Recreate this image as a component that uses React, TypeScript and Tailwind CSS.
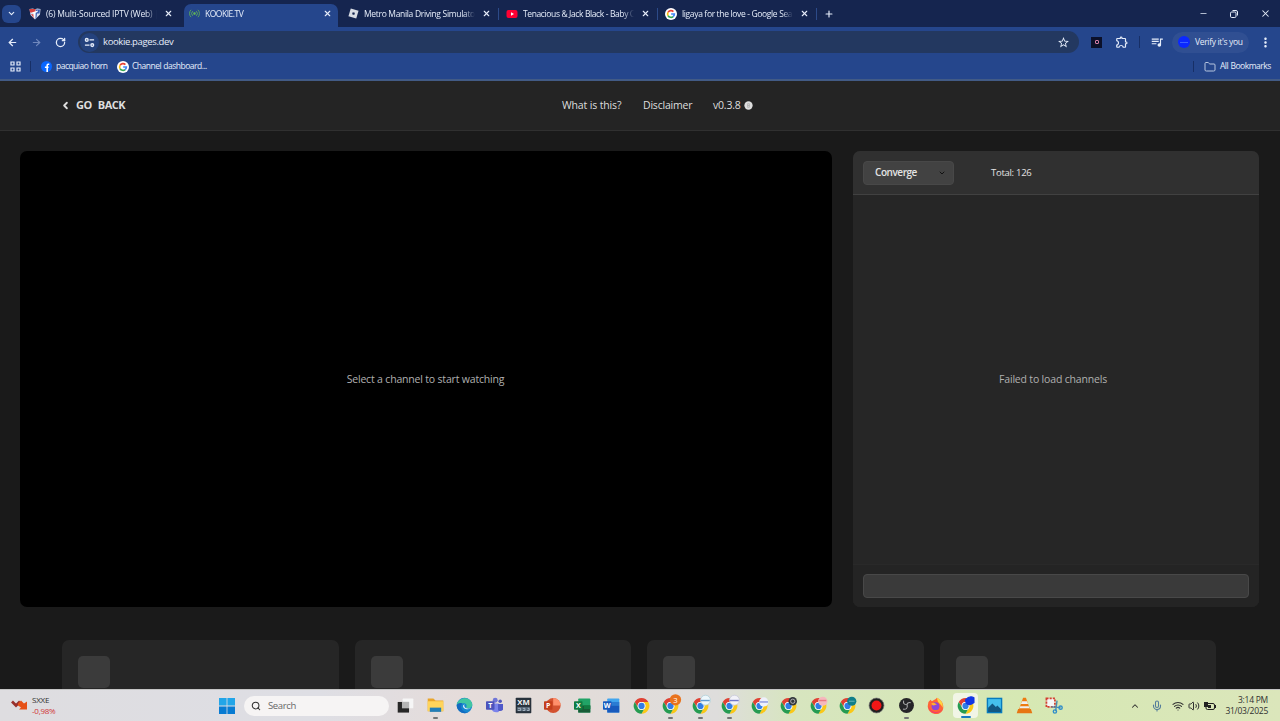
import React from 'react';
import {
  ArrowLeft,
  ArrowRight,
  ChevronDown,
  ChevronLeft,
  ChevronUp,
  Folder,
  Mic,
  Minus,
  Plus,
  RotateCw,
  Search,
  Volume2,
  Wifi,
  X
} from 'lucide-react';
import { MdMoreVert, MdOutlineExtension, MdQueueMusic, MdStarBorder } from 'react-icons/md';

const GoogleIcon = () => (
  <svg viewBox="0 0 24 24" className="size-[12px] shrink-0">
    <circle cx="12" cy="12" r="12" fill="#fff" />
    <g fill="none" strokeWidth="3.3">
      <path d="M16.8 7.2A6.8 6.8 0 0 0 6 8.800" stroke="#ea4335" />
      <path d="M6 8.800a6.800 6.800 0 0 0 0 6.400" stroke="#fbbc05" />
      <path d="M6 15.200a6.800 6.800 0 0 0 10.300 2" stroke="#34a853" />
      <path d="M16.300 17.200a6.800 6.800 0 0 0 2.500-5.200H12.300" stroke="#4285f4" />
    </g>
  </svg>
);

const FacebookIcon = () => (
  <svg viewBox="0 0 24 24" className="ml-[10px] size-[11px] shrink-0">
    <circle cx="12" cy="12" r="12" fill="#0866ff" />
    <path d="M18 7h-2.500q-2 0-2 2v15M8.500 13.500h8" fill="none" stroke="#fff" strokeWidth="3.400" />
  </svg>
);

const ShieldIcon = () => (
  <svg viewBox="0 0 24 24" className="size-[12px] shrink-0">
    <path d="M1 2 8 1l4 2 4-2 7 1-1 11-10 10L3 14Z" fill="#d9dfee" />
    <path d="M1 2h12v7H2ZM4 12l6 9v-8Z" fill="#d8413e" />
    <path d="M14 3h8l-1 8h-5l-1 8-2 3Z" fill="#3b62b5" />
    <path d="m5 9 13-4-1 3-5 2v9H9v-9Z" fill="#fff" />
  </svg>
);

const SignalIcon = () => (
  <svg viewBox="0 0 24 24" fill="none" stroke="#5dad5a" strokeWidth="2" className="size-[11px] shrink-0">
    <circle cx="12" cy="12" r="2.2" fill="#5dad5a" />
    <path d="M8 7a7 7 0 0 0 0 10M16 7a7 7 0 0 1 0 10M4.5 4a11.500 11.500 0 0 0 0 16M19.500 4a11.500 11.500 0 0 1 0 16" />
  </svg>
);

const RobloxIcon = () => (
  <svg viewBox="0 0 24 24" className="size-[11px] shrink-0">
    <path d="M6 1 23 6l-5 17L1 18Z" fill="#d9dde5" />
    <path d="m10.200 9 4.800 1.300-1.300 4.800L9 13.800Z" fill="#15254f" />
  </svg>
);

const YoutubeIcon = () => (
  <svg viewBox="0 0 24 24" className="size-[12px] shrink-0">
    <rect x="1" y="4" width="22" height="16" rx="4" fill="#ff0033" />
    <path d="m10 8.500 6 3.500-6 3.500Z" fill="#fff" />
  </svg>
);

const tabs = [
  { title: '(6) Multi-Sourced IPTV (Web) | I', icon: <ShieldIcon />, text: 'tracking-[-0.2px]' },
  { title: 'KOOKIE.TV', icon: <SignalIcon />, active: true, text: 'tracking-[-0.48px]' },
  { title: 'Metro Manila Driving Simulator', icon: <RobloxIcon />, text: 'tracking-[-0.32px]' },
  { title: 'Tenacious & Jack Black - Baby O', icon: <YoutubeIcon />, text: 'tracking-[-0.38px]' },
  { title: 'ligaya for the love - Google Sea', icon: <GoogleIcon />, text: 'tracking-[-0.35px]' }
];

const TabStrip = () => (
  <div className="flex h-[27px] items-center bg-[#15254f]">
    <div className="w-[25px] pl-[2px]">
      <div className="flex h-[18px] w-[19px] items-center justify-center rounded-[6px] bg-[#25468c]">
        <ChevronDown className="size-[9px]" strokeWidth={3} />
      </div>
    </div>
    {tabs.map((tab, i) => (
      <div key={tab.title} className="flex h-full w-[159px] items-end">
        <div
          className={
            tab.active
              ? 'flex h-[23px] w-[154px] items-center rounded-t-[7px] bg-[#25468c] pb-[4px] pl-[4px]'
              : 'flex h-[23px] w-[155px] items-center pb-[4px] pl-[4px]'
          }
        >
          <div className="flex w-[12px] justify-center">{tab.icon}</div>
          <div
            className={`ml-[5px] w-[111px] text-[8.500px] leading-[14px] font-medium whitespace-nowrap [mask-image:linear-gradient(90deg,#000_90%,transparent)] ${tab.text}`}
          >
            {tab.title}
          </div>
          <X className="ml-[7px] size-[9px] shrink-0" strokeWidth={3} />
        </div>
        {i > 1 && <div className="mb-[7px] h-[12px] w-px bg-[#2c4a88]" />}
      </div>
    ))}
    <Plus className="ml-[4px] size-[10px]" strokeWidth={2.800} />
    <div className="ml-auto flex items-center">
      <Minus className="mr-[21px] size-[9px]" strokeWidth={2} />
      <svg viewBox="0 0 10 10" fill="none" stroke="currentColor" className="mr-[21px] size-[10px]">
        <rect x="1.500" y="3" width="5.500" height="5.500" rx="1.200" />
        <path d="M3.500 1.500H7A1.500 1.500 0 0 1 8.500 3v3.500" />
      </svg>
      <X className="mr-[9px] size-[11px]" strokeWidth={2.200} />
    </div>
  </div>
);

const Toolbar = () => (
  <div className="flex h-[29px] items-center bg-[#25468c] pt-px">
    <ArrowLeft className="ml-[7px] size-[11px]" strokeWidth={2.700} />
    <ArrowRight className="ml-[13px] size-[11px] text-[#7088bd]" strokeWidth={2.500} />
    <RotateCw className="ml-[13px] size-[11px]" strokeWidth={2.800} />
    <div className="ml-[12px] flex h-[22px] w-[1001px] items-center rounded-full bg-[#233860] pl-[2px]">
      <div className="flex size-[19px] items-center justify-center rounded-full bg-[#24427d]">
        <svg viewBox="0 0 12 12" fill="none" stroke="currentColor" strokeWidth="1.500" className="size-[11px]">
          <circle cx="3" cy="3.200" r="1.500" />
          <path d="M6 3.200h5M1 8.800h5" />
          <circle cx="9" cy="8.800" r="1.500" />
        </svg>
      </div>
      <span className="ml-[4px] text-[9.500px] font-medium tracking-[-0.36px]">kookie.pages.dev</span>
      <MdStarBorder className="mr-[9px] ml-auto size-[13px]" />
    </div>
    <div className="ml-[12px] flex size-[11px] items-center justify-center bg-[#0b1029]">
      <div className="size-[4px] rounded-[1px] border border-[#d27ba5]" />
    </div>
    <MdOutlineExtension className="ml-[13px] size-[14px]" />
    <div className="ml-[10px] h-[12px] w-px bg-[#172f66]" />
    <MdQueueMusic className="ml-[10px] size-[14px]" />
    <div className="ml-[8px] flex h-[21px] w-[77px] shrink-0 items-center rounded-full bg-[#304f92] pl-[6px]">
      <div className="flex size-[12px] shrink-0 items-center justify-center rounded-full bg-[#0b28ff]">
        <div className="h-px w-[8px] bg-[#3b62ff]" />
      </div>
      <span className="ml-[5px] text-[8.500px] font-medium tracking-[-0.33px] whitespace-nowrap">Verify it's you</span>
    </div>
    <MdMoreVert className="ml-[9px] size-[15px] shrink-0" />
  </div>
);

const Bookmarks = () => (
  <div className="flex h-[25px] items-center border-b-2 border-[#425b86] bg-[#25468c] pb-[2px] text-[8.500px] font-medium [word-spacing:0.6px]">
    <svg viewBox="0 0 11 11" fill="none" stroke="currentColor" strokeWidth="1.200" className="ml-[10px] size-[11px]">
      <path d="M1 1h3v3H1ZM7 1h3v3H7ZM1 7h3v3H1ZM7 7h3v3H7Z" />
    </svg>
    <div className="ml-[9px] h-[11px] w-px bg-[#172f66]" />
    <FacebookIcon />
    <span className="ml-[4px] w-[61px] tracking-[-0.52px] whitespace-nowrap">pacquiao horn</span>
    <GoogleIcon />
    <span className="ml-[3px] tracking-[-0.51px]">Channel dashboard...</span>
    <div className="ml-auto h-[11px] w-px bg-[#172f66]" />
    <Folder className="ml-[10px] size-[12px] text-[#b8c6df]" strokeWidth={2} />
    <span className="mr-[9px] ml-[4px] w-[51px] tracking-[-0.5px] whitespace-nowrap">All Bookmarks</span>
  </div>
);

const SiteHeader = () => (
  <header className="flex h-[50px] shrink-0 items-center border-b border-[#303030] bg-[#242424] text-[10.500px] font-medium text-[#dedede]">
    <div className="flex w-[562px] items-center pl-[60px]">
      <ChevronLeft className="size-[11px]" strokeWidth={4} />
      <span className="ml-[5px] text-[11px] font-bold tracking-[-0.45px] [word-spacing:3.5px]">GO BACK</span>
    </div>
    <span className="w-[81px] tracking-[-0.14px]">What is this?</span>
    <span className="w-[70px] tracking-[-0.2px]">Disclaimer</span>
    <span className="w-[31px] tracking-[-0.2px]">v0.3.8</span>
    <svg viewBox="0 0 10 10" className="size-[9px]">
      <circle cx="5" cy="5" r="4.600" fill="#dedede" />
      <path d="M4 3h2v4H4ZM4 5h2" fill="none" stroke="#aaa" strokeWidth=".8" />
    </svg>
  </header>
);

const ChannelPanel = () => (
  <aside className="flex h-[456px] w-[406px] flex-col overflow-hidden rounded-[7px] bg-[#262626]">
    <div className="flex h-[44px] shrink-0 items-center border-b border-[#414141] bg-[#303030] pl-[10px] text-[9.500px] font-medium text-[#e4e4e4]">
      <button className="flex h-[24px] w-[91px] items-center justify-between rounded-[4px] border border-[#484848] bg-[#424242] pr-[7px] pl-[11px]">
        <span className="text-[10px] font-semibold tracking-[-0.45px]">Converge</span>
        <ChevronDown className="size-[8px] text-[#111]" strokeWidth={3} />
      </button>
      <span className="ml-[37px] pt-px tracking-[-0.28px]">Total: 126</span>
    </div>
    <div className="flex h-[369px] items-center justify-center pr-[6px] text-[10.500px] text-[#b0b0b0]">
      <span className="tracking-[-0.18px]">Failed to load channels</span>
    </div>
    <div className="flex flex-1 items-center border-t border-[#292929] bg-[#242424] px-[10px] pb-px">
      <div className="h-[24px] w-full rounded-[4px] border border-[#484848] bg-[#3a3a3a]" />
    </div>
  </aside>
);

const ChromeIcon = ({ children }: { children?: React.ReactNode }) => (
  <svg viewBox="0 0 24 24" className="size-[17px] overflow-visible">
    <g transform="translate(1 1.500) scale(.92)">
      <path d="M1.600 6A12 12 0 0 1 22.400 6H12a6 6 0 0 0-5.200 9Z" fill="#df4133" />
      <path d="M22.400 6A12 12 0 0 1 12 24l5.200-9A6 6 0 0 0 12 6Z" fill="#fac817" />
      <path d="M12 24A12 12 0 0 1 1.600 6l5.200 9a6 6 0 0 0 10.400 0Z" fill="#259b51" />
      <circle cx="12" cy="12" r="6" fill="#fff" />
      <circle cx="12" cy="12" r="4.800" fill="#327de5" />
    </g>
    {children}
  </svg>
);

// small letter tile used by the office apps
const Letter = ({ children, bg }: { children: string; bg: string }) => (
  <>
    <rect x="0" y="6" width="12" height="12" rx="1" fill={bg} />
    <text x="6" y="15.500" textAnchor="middle" fontSize="10" fontWeight="700" fill="#fff">
      {children}
    </text>
  </>
);

const Glyph = ({ children }: { children: React.ReactNode }) => (
  <svg viewBox="0 0 24 24" className="size-[17px] overflow-visible">
    {children}
  </svg>
);

const apps: { name: string; icon: React.ReactNode; running?: boolean; focused?: boolean }[] = [
  {
    name: 'Task view',
    icon: (
      <Glyph>
        <rect x="8" y="2" width="15" height="14" rx="1" fill="#f6f6f6" />
        <path d="M1 7h16v15H1Z" fill="#272727" />
        <path d="M7 7h10v9H7Z" fill="#b5b5b5" />
      </Glyph>
    )
  },
  {
    name: 'Explorer',
    running: true,
    icon: (
      <Glyph>
        <path d="M1 2h8l3 3h11v15H1Z" fill="#e9a52a" />
        <path d="M1 6h22v14H1Z" fill="#ffd45b" />
        <path d="M4 15h16v6H4Z" fill="#227eb8" />
      </Glyph>
    )
  },
  {
    name: 'Edge',
    icon: (
      <Glyph>
        <circle cx="12" cy="12" r="11" fill="#1687cf" />
        <path d="M1 11C3-1 22-2 23 11c0 5-6 6-9 4 3-4-1-7-5-6-4 0-7 1-8 2Z" fill="#42c6a1" />
        <path d="M9 9c-4 4-1 12 8 13C9 25 1 19 1 12c1-3 4-4 8-3Z" fill="#136ac0" />
        <path d="M12 10c-2 5 4 8 9 6-4 3-12 1-11-4Z" fill="#e0eef8" />
      </Glyph>
    )
  },
  {
    name: 'Teams',
    icon: (
      <Glyph>
        <circle cx="13" cy="4.500" r="3.500" fill="#7076d8" />
        <circle cx="20" cy="6" r="2.500" fill="#5158bd" />
        <path d="M8 9h10v12q-7 2-10-3Z" fill="#7b83eb" />
        <path d="M17 10h7v8q-3 3-7 1Z" fill="#5059c9" />
        <Letter bg="#4b53bc">T</Letter>
      </Glyph>
    )
  },
  {
    name: 'XM',
    icon: (
      <Glyph>
        <rect x="1" y="1" width="22" height="22" rx="1" fill="#28323c" />
        <text x="12" y="11.500" textAnchor="middle" fontSize="11" fontWeight="700" fill="#f2f2f2">
          XM
        </text>
        <path d="M3 14h18v6H3Z" fill="#536474" />
        <path d="M4 16h4v3H4m7-3h3v3h-3m7-3h2v3h-3" fill="none" stroke="#b3c0cc" strokeWidth="1.200" />
      </Glyph>
    )
  },
  {
    name: 'PowerPoint',
    icon: (
      <Glyph>
        <circle cx="13" cy="12" r="10.500" fill="#d35230" />
        <path d="M13 1.500A10.500 10.500 0 0 1 23.500 12H13Z" fill="#ff8f6b" />
        <Letter bg="#c43e1c">P</Letter>
      </Glyph>
    )
  },
  {
    name: 'Excel',
    icon: (
      <Glyph>
        <rect x="6" y="2" width="17" height="20" rx="1" fill="#21a366" />
        <path d="M6 12h17v10H6Z" fill="#185c37" />
        <path d="M14 12h9v5h-9Z" fill="#107c41" />
        <Letter bg="#107c41">X</Letter>
      </Glyph>
    )
  },
  {
    name: 'Word',
    icon: (
      <Glyph>
        <rect x="6" y="2" width="17" height="20" rx="1" fill="#41a5ee" />
        <path d="M6 7h17v5H6Z" fill="#2b7cd3" />
        <path d="M6 12h17v10H6Z" fill="#185abd" />
        <Letter bg="#185abd">W</Letter>
      </Glyph>
    )
  },
  { name: 'Chrome', icon: <ChromeIcon /> },
  {
    name: 'Chrome 3',
    running: true,
    icon: (
      <ChromeIcon>
        <circle cx="19" cy="4" r="8" fill="#e9731d" />
        <text x="19" y="8" textAnchor="middle" fontSize="11" fill="#fff">
          3
        </text>
      </ChromeIcon>
    )
  },
  {
    name: 'Chrome profile A',
    running: true,
    icon: (
      <ChromeIcon>
        <circle cx="19" cy="4.500" r="7" fill="#eef7fb" stroke="#a8ccd8" />
        <path d="M12 5h13" stroke="#629bd2" strokeWidth="2" />
      </ChromeIcon>
    )
  },
  {
    name: 'Chrome profile B',
    running: true,
    icon: (
      <ChromeIcon>
        <circle cx="19" cy="4.500" r="7" fill="#f2f2f8" stroke="#c3c5d8" />
        <path d="M12 5h13" stroke="#7077ca" strokeWidth="2" />
      </ChromeIcon>
    )
  },
  {
    name: 'Chrome profile C',
    icon: (
      <ChromeIcon>
        <circle cx="18" cy="7" r="6.500" fill="#eef0fb" />
        <path d="M12 7h12" stroke="#8b97df" strokeWidth="2" />
      </ChromeIcon>
    )
  },
  {
    name: 'Chrome profile D',
    icon: (
      <ChromeIcon>
        <circle cx="18" cy="6" r="6" fill="#33383d" />
        <circle cx="18" cy="6" r="3" fill="none" stroke="#bbb" strokeWidth="1.300" />
      </ChromeIcon>
    )
  },
  {
    name: 'Chrome profile E',
    icon: (
      <ChromeIcon>
        <circle cx="18" cy="6" r="6.500" fill="#f5b8bd" />
        <path d="M13 5h10" stroke="#e87982" strokeWidth="2" />
      </ChromeIcon>
    )
  },
  {
    name: 'Chrome profile F',
    icon: (
      <ChromeIcon>
        <circle cx="18" cy="6" r="6.500" fill="#107f89" />
        <path d="M14 6h8" stroke="#5fb1b5" strokeWidth="1.500" />
      </ChromeIcon>
    )
  },
  {
    name: 'Recorder',
    icon: (
      <Glyph>
        <circle cx="12" cy="12" r="10.500" fill="#202020" stroke="#777" />
        <circle cx="12" cy="12" r="7" fill="#f01616" />
      </Glyph>
    )
  },
  {
    name: 'OBS',
    running: true,
    icon: (
      <Glyph>
        <circle cx="12" cy="12" r="10.500" fill="#252528" />
        <path d="M8 5c-1 4 1 6 5 6M18 8c-3-1-6 1-5 4M13 12c1 4-2 6-6 5" fill="none" stroke="#a9a9aa" strokeWidth="1.500" />
      </Glyph>
    )
  },
  {
    name: 'Firefox',
    icon: (
      <Glyph>
        <path d="M2 7 5 4l2 2c2-2 5-2 7-5 7 4 9 8 9 13 0 14-21 13-22-1Z" fill="#ff6535" />
        <path d="M14 1c7 4 9 8 8 14-2-6-7-5-8-14Z" fill="#ffd43f" />
        <path d="M2 12c2 9 13 13 20 5-4 8-19 9-20-5Z" fill="#f43b6b" />
        <circle cx="12" cy="13" r="5.500" fill="#8c46d7" />
        <path d="M6 9c4-2 6 0 8 2-3 0-4 2-7 0Z" fill="#ffb02f" />
      </Glyph>
    )
  },
  {
    name: 'Chrome current',
    focused: true,
    icon: (
      <ChromeIcon>
        <path d="M12 4q6-7 12-3v7q-6 5-11 1Z" fill="#1237e4" stroke="#1237e4" strokeWidth="1.500" strokeLinejoin="round" />
      </ChromeIcon>
    )
  },
  {
    name: 'Photos',
    icon: (
      <Glyph>
        <rect x="1" y="1" width="22" height="22" fill="#087bbd" />
        <path d="M3 3h18v15H3Z" fill="#45c0ed" />
        <path d="m3 15 6-6 5 5 2-2 5 5v4H3Z" fill="#125782" />
      </Glyph>
    )
  },
  {
    name: 'VLC',
    icon: (
      <Glyph>
        <path d="M10 1h4l6 17H4Z" fill="#ed7b12" />
        <path d="m8.500 6-1.500 4h10l-1.500-4ZM6 13l-1 3h14l-1-3Z" fill="#efefef" />
        <path d="M3 17h18l2 6H1Z" fill="#e77613" />
      </Glyph>
    )
  },
  {
    name: 'Snipping tool',
    icon: (
      <Glyph>
        <rect x="2" y="2" width="12" height="12" fill="#f6f6f6" stroke="#d23f31" strokeWidth="2.500" strokeDasharray="3 1.500" />
        <path d="m17 5-2 15M9 14l13 1" stroke="#488bb1" strokeWidth="2" />
        <circle cx="14" cy="20.500" r="2.300" fill="none" stroke="#318ec9" strokeWidth="2" />
        <circle cx="22" cy="15" r="2.300" fill="none" stroke="#318ec9" strokeWidth="2" />
      </Glyph>
    )
  }
];

const Taskbar = () => (
  <footer className="flex h-[32px] shrink-0 items-center border-t border-[#c5c5c5] bg-[linear-gradient(90deg,#dedde0_0%,#dedee4_25%,#e5dcda_36%,#e2dcd9_46%,#dedddc_56%,#d7e5bf_62%,#d6e8b3_80%,#dbe6bb_100%)] text-[#303030]">
    <div className="flex w-[219px] shrink-0 items-center pl-[11px]">
      <svg viewBox="0 0 17 12" className="size-[17px]">
        <path d="m1 2 4 4 4-4" fill="none" stroke="#98302b" strokeWidth="2.700" />
        <path d="m7 4 3-3 3 3 3-2v8H8l2-2-3-2Z" fill="#e65016" />
      </svg>
      <div className="ml-[4px] pb-px text-[8px] leading-[11px] tracking-[-0.25px]">
        <div>SXXE</div>
        <div className="text-[#d13434]">-0,98%</div>
      </div>
    </div>
    <svg viewBox="0 0 16 16" className="size-[16px] shrink-0">
      <path d="M0 0h7.600v7.600H0ZM8.400 0H16v7.600H8.400Z" fill="#22a5e8" />
      <path d="M0 8.400h7.600V16H0ZM8.400 8.400H16V16H8.400Z" fill="#087bd2" />
    </svg>
    <div className="mr-[2px] ml-[9px] flex h-[20px] w-[145px] shrink-0 items-center rounded-full bg-[#f6f4f4] pl-[7px]">
      <Search className="size-[10px]" strokeWidth={2.500} />
      <span className="ml-[7px] pt-px text-[9.500px] tracking-[-0.35px] text-[#676767]">Search</span>
    </div>
    <div className="flex h-full items-center">
      {apps.map((app) => (
        <div key={app.name} className="flex h-full w-[29.460px] items-center justify-center">
          <div
            className={
              app.focused
                ? 'relative flex size-[25px] items-center justify-center rounded-[4px] bg-[#f1f5e6]'
                : 'relative flex size-[25px] items-center justify-center'
            }
          >
            {app.icon}
            {app.running && <div className="absolute -bottom-px left-[10px] h-[2px] w-[5px] rounded-full bg-[#757575]" />}
            {app.focused && <div className="absolute bottom-0 left-[8px] h-[2px] w-[10px] rounded-full bg-[#1779c4]" />}
          </div>
        </div>
      ))}
    </div>
    <ChevronUp className="ml-auto size-[10px]" strokeWidth={2.500} />
    <Mic className="ml-[11px] size-[12px] text-[#547c9b]" strokeWidth={2.200} />
    <Wifi className="ml-[9px] size-[12px]" strokeWidth={2.200} />
    <Volume2 className="ml-[4px] size-[12px]" strokeWidth={2} />
    <svg viewBox="0 0 12 10" className="ml-[4px] h-[10px] w-[12px]">
      <rect x="2" y="2.500" width="8.500" height="6" rx="1.500" fill="none" stroke="#222" />
      <path d="M0 1h4v5H0ZM4 4h3v3H4ZM11 4h1v3h-1Z" fill="#222" />
    </svg>
    <div className="mr-[12px] ml-[9px] w-[43px] pb-px text-right text-[8.500px] leading-[11px] tracking-[-0.25px] whitespace-nowrap">
      <div>3:14 PM</div>
      <div>31/03/2025</div>
    </div>
  </footer>
);

export default function App() {
  return (
    <div className="flex h-[721px] w-[1280px] flex-col overflow-hidden bg-[#1a1a1a] font-['Open_Sans','Noto_Sans',sans-serif]">
      <div className="shrink-0 text-[#e6edfa]">
        <TabStrip />
        <Toolbar />
        <Bookmarks />
      </div>
      <SiteHeader />
      <main className="flex min-h-0 flex-1 flex-col overflow-hidden">
        <section className="flex shrink-0 gap-[21px] pt-[20px] pl-[20px]">
          <div className="flex h-[456px] w-[812px] items-center justify-center rounded-[7px] bg-black pt-px pr-px text-[10.500px] text-[#b0b0b0]">
            <span className="tracking-[-0.18px]">Select a channel to start watching</span>
          </div>
          <ChannelPanel />
        </section>
        <section className="mt-[33px] flex shrink-0 gap-[16px] pl-[62px]">
          {[0, 1, 2, 3].map((card) => (
            <div key={card} className="h-[80px] w-[276.500px] rounded-[7px] bg-[#262626] p-[16px]">
              <div className="size-[32px] rounded-[5px] bg-[#3b3b3b]" />
            </div>
          ))}
        </section>
      </main>
      <Taskbar />
    </div>
  );
}
